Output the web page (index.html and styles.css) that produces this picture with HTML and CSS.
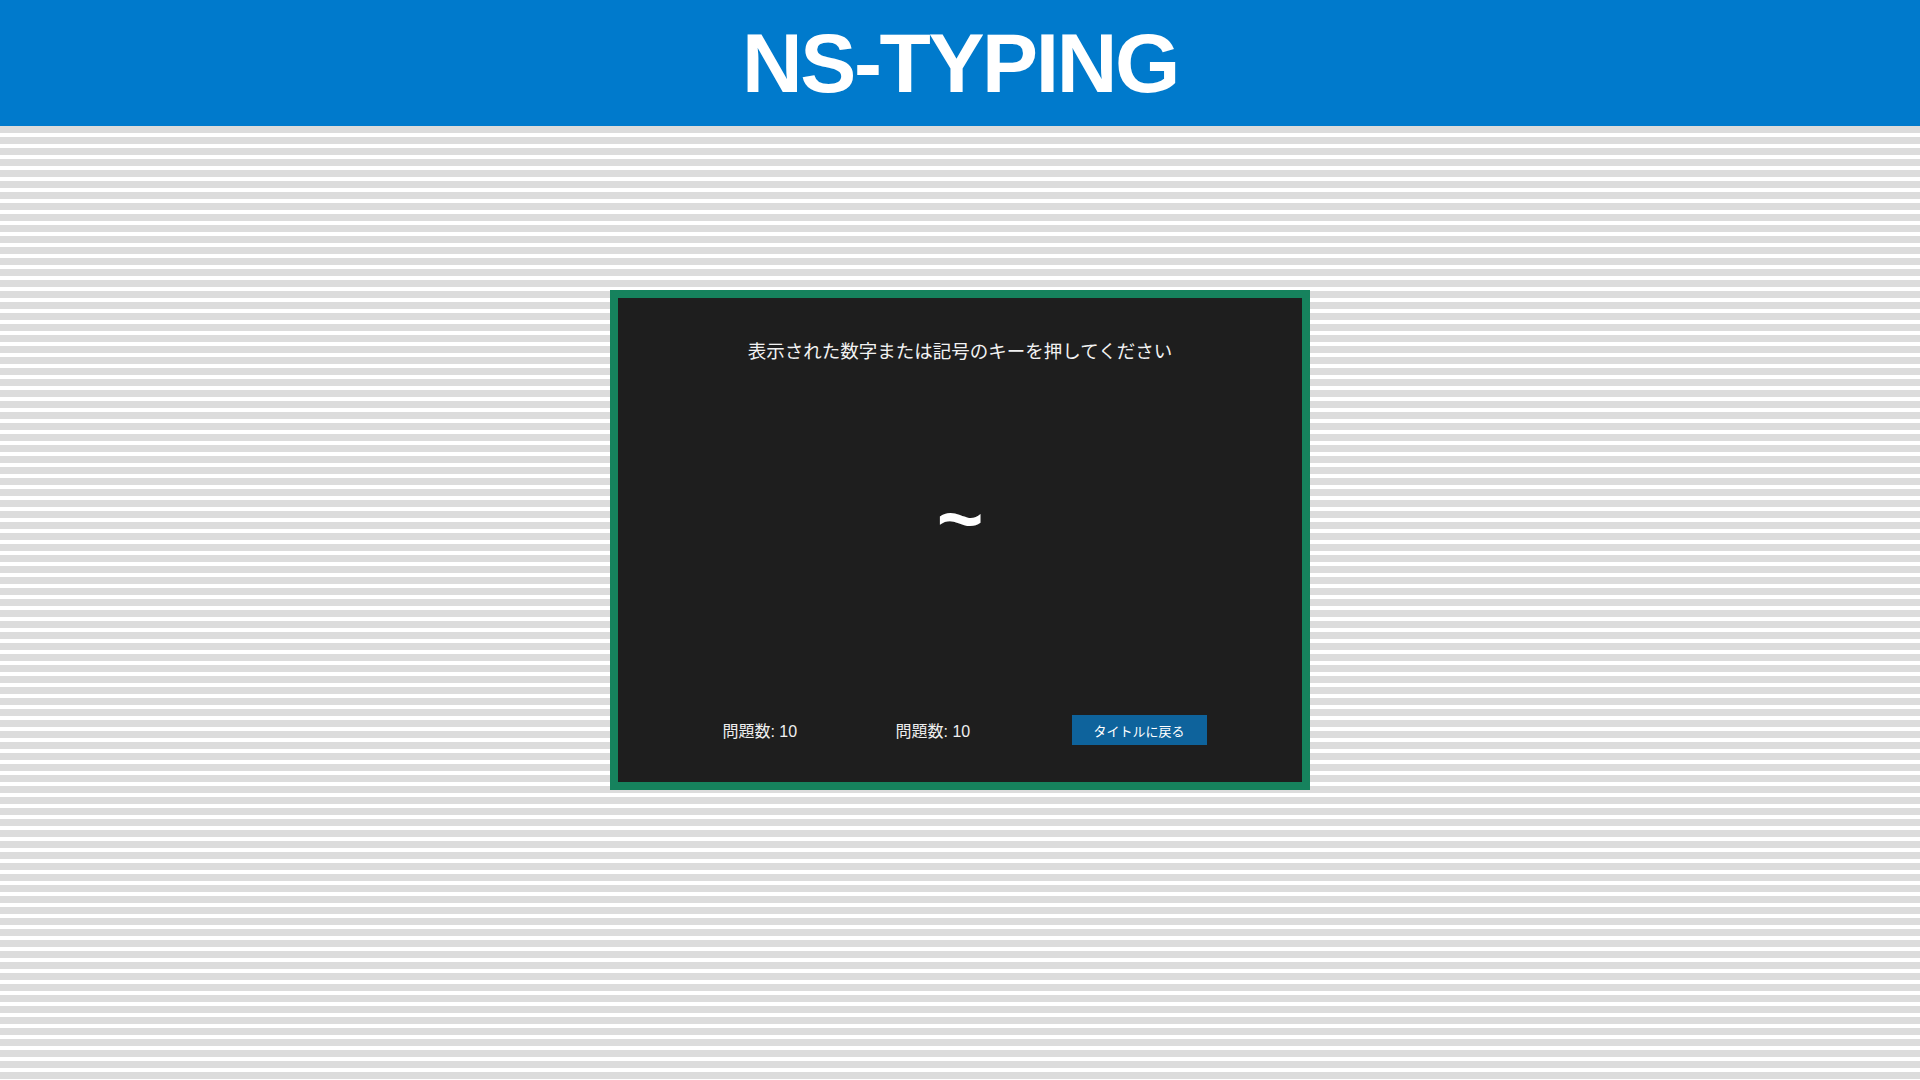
FILE: index.html
```html
<!DOCTYPE html>
<html lang="ja">
<head>
<meta charset="utf-8">
<title>NS-TYPING</title>
<link rel="stylesheet" href="styles.css">
</head>
<body>
<header class="site-header">
  <h1 class="site-title">NS-TYPING</h1>
</header>
<main class="stage">
  <section class="game-card">
    <p class="instruction">表示された数字または記号のキーを押してください</p>
    <div class="target-char">~</div>
    <div class="status-row">
      <span class="stat">問題数: 10</span>
      <span class="stat">問題数: 10</span>
      <button class="back-button" type="button">タイトルに戻る</button>
    </div>
  </section>
</main>
</body>
</html>
```

FILE: styles.css
```css
html, body {
  margin: 0;
  padding: 0;
}

body {
  font-family: "Liberation Sans", "Noto Sans CJK JP", sans-serif;
  background: #ffffff;
  min-height: 1080px;
  display: flex;
  flex-direction: column;
}

.site-header {
  height: 126px;
  background: #007acc;
  display: flex;
  align-items: center;
  justify-content: center;
}

.site-title {
  margin: 0;
  color: #ffffff;
  font-family: "Liberation Sans", Arial, sans-serif;
  font-weight: 700;
  font-size: 84px;
  letter-spacing: -2.4px;
  line-height: 1;
}

.stage {
  flex: 1;
  background: repeating-linear-gradient(to bottom, #dcdcdc 0, #dcdcdc 7px, #ffffff 7px, #ffffff 11px);
  display: flex;
  justify-content: center;
  align-items: flex-start;
}

.game-card {
  box-sizing: border-box;
  width: 700px;
  height: 500px;
  margin-top: 164px;
  border: 8px solid #16825d;
  background: #1e1e1e;
  display: flex;
  flex-direction: column;
  align-items: center;
  color: #ffffff;
}

.instruction {
  margin: 37px 0 0;
  font-family: "Noto Sans CJK JP", sans-serif;
  font-size: 18.5px;
  line-height: 30px;
  font-weight: 400;
  color: #f2f2f2;
}

.target-char {
  margin-top: 114px;
  font-family: "Liberation Sans", Arial, sans-serif;
  font-weight: 700;
  font-size: 80px;
  line-height: 80px;
  height: 80px;
}

.status-row {
  margin-top: auto;
  margin-bottom: 37px;
  width: 100%;
  height: 30px;
  display: flex;
  align-items: center;
  justify-content: space-evenly;
  padding-left: 6px;
  box-sizing: border-box;
}

.stat {
  font-size: 16px;
  color: #f0f0f0;
}

.back-button {
  width: 135px;
  height: 30px;
  margin-left: 3px;
  margin-right: -3px;
  border: none;
  border-radius: 0;
  background: #0e639c;
  color: #ffffff;
  font-family: "Noto Sans CJK JP", sans-serif;
  font-size: 13px;
  padding: 0;
}
```
